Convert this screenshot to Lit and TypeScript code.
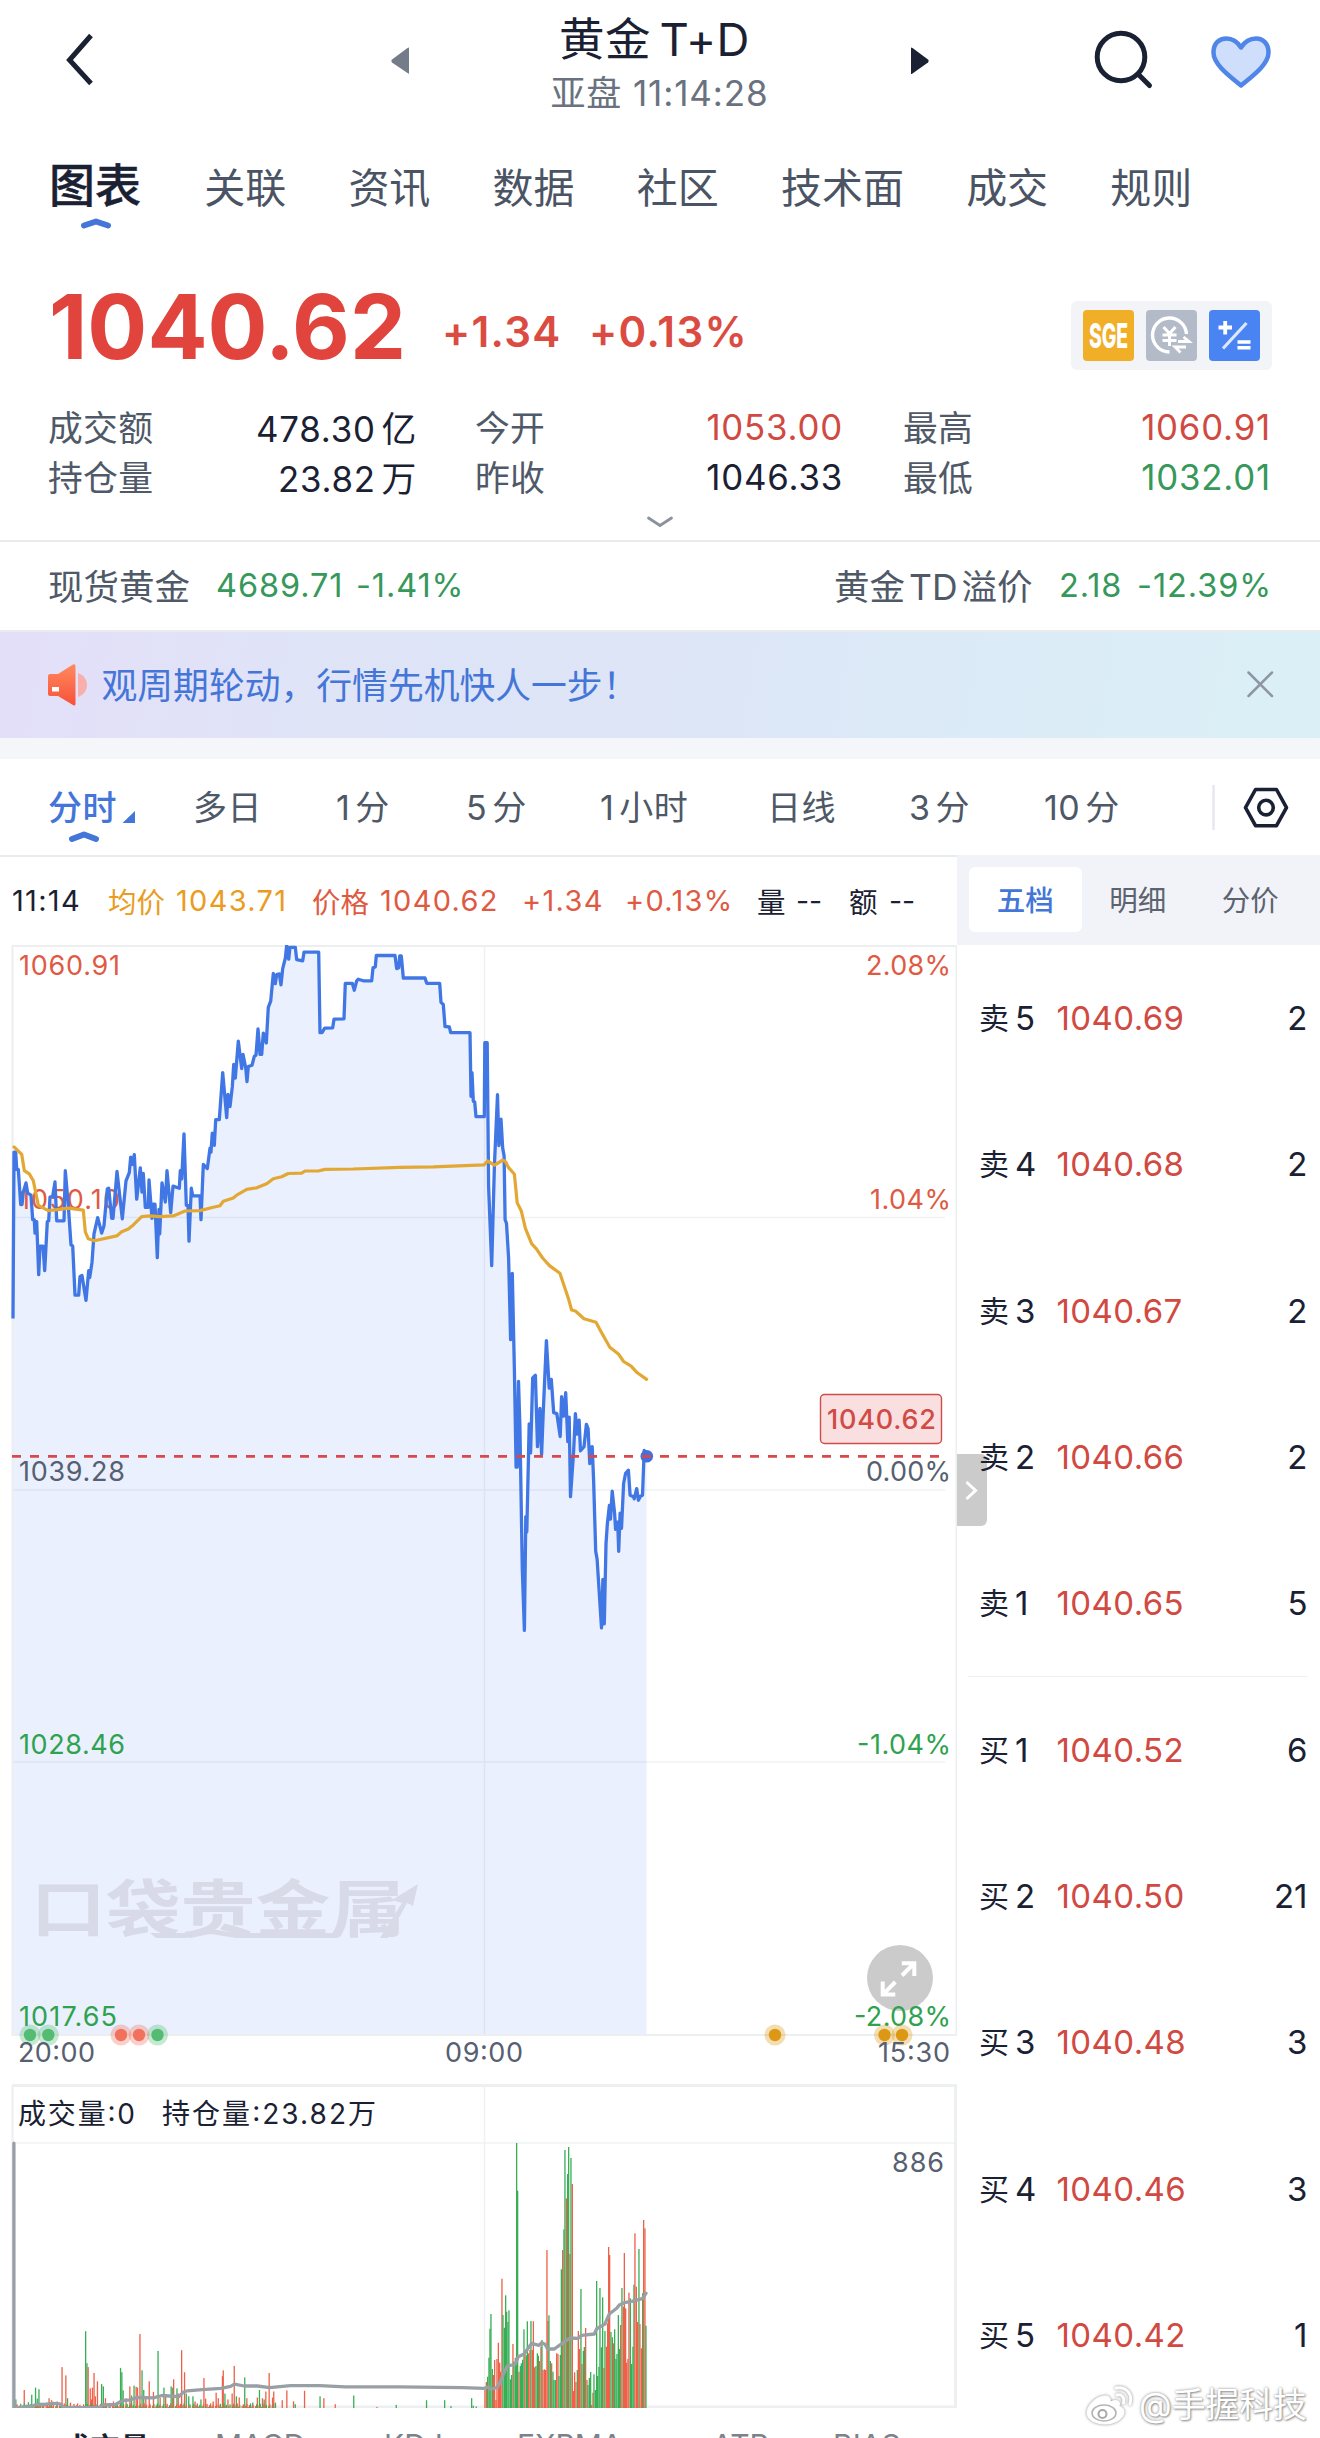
import { LitElement, html, svg, css } from "lit";
import { customElement } from "lit/decorators.js";

type Pt = [number, number];

/** Turns "x,y x,y" source samples into plot coordinates. */
const map = (src: string, sx: number, ox: number, sy: number, oy: number): Pt[] =>
  src.trim().split(/\s+/).map((p) => {
    const [x, y] = p.split(",").map(Number);
    return [ox + x / sx, oy + y / sy] as Pt;
  });
const str = (pts: Pt[]) => pts.map(([x, y]) => `${x.toFixed(1)},${y.toFixed(1)}`).join(" ");

const PRICE: Pt[] = [
  ...map(
    `39,1417 42,1010 47,1010 50,1052 55,1052 62,1138 66,1138 70,1108 78,1085 83,1110 93,1115 98,1175 103,1175 105,1208 110,1180 116,1310 120,1240 129,1240 134,1300 142,1180 146,1178 150,1120 158,1118 165,1083 170,1178 192,1178 196,1055 205,1140 213,1237 218,1240 225,1360 236,1360 240,1315 246,1312 258,1373 266,1300 269,1317 276,1280 282,1210 293,1170 305,1208 312,1190 322,1100 326,1098 335,1172 339,1172 351,1057 367,1173 378,1080 388,1060 392,1022 397,1040 403,1016 410,1125 421,1048 426,1108 430,1062 436,1145 445,1145 447,1078 456,1172 459,1137 465,1137 472,1268 477,1150 479,1210 486,1085 496,1132 501,1055 512,1158 519,1093 538,1098 541,1055 545,1075 552,965 559,1140 564,1140 567,1228 574,1098 578,1117 600,1117 603,1175 610,1040 622,1050 630,1000 633,1010 637,963 643,993 647,930 658,930 668,815 680,925 684,868 690,898 697,850 701,795 706,828 715,738 725,805 729,770 737,803 741,837 745,800 756,797 763,775 768,772 774,708 780,770 785,770 790,718 799,742 805,655 812,640 820,572 826,597 830,575 838,573 843,600 848,560 856,535 860,503 866,537 870,508 886,508 890,538 908,541 912,520 956,520 960,717 966,717 974,706 998,705 1002,684 1032,683 1036,596 1057,596 1063,613 1070,590 1075,586 1090,590 1115,590 1119,558 1126,556 1129,528 1185,528 1190,560 1196,558 1199,529 1204,529 1210,583 1275,583 1280,596 1319,596 1323,643 1330,648 1335,702 1348,703 1352,717 1410,717 1413,873 1416,815 1420,885 1424,887 1428,923 1453,923`,
    3, 0, 2.45, 740
  ),
  ...map(
    `72,358 79,358 83,640 92,795 100,600 109,460 113,560 119,508 124,565 128,580 131,705 135,712 141,780 147,940 152,810 158,1000 163,1190 166,1190 170,1022 174,1110 181,1390 187,1510 191,1287 194,1317 201,1105 205,1162 211,1015 219,1010 225,1150 232,1075 237,1165 242,1080 251,942 259,1035 265,1018 272,1083 281,1085 291,1130 295,1052 301,1090 307,1044 313,1140 317,1092 321,1248 330,1160 335,1085 340,1125 346,1098 350,1158 360,1150 367,1106 372,1115 377,1183 384,1150 388,1215 394,1355 398,1370 411,1505 415,1410 419,1497 424,1340 428,1300 434,1265 437,1292 442,1237 449,1280 452,1312 458,1298 461,1355 465,1280 469,1310 475,1222 481,1202 489,1196 494,1245 504,1248 506,1252 513,1232 518,1255 524,1247 530,1245 535,1157 542,1168`,
    2.904, 460, 1.96, 860
  ),
];

const AVERAGE: Pt[] = [
  ...map(
    `42,997 65,1015 73,1055 88,1063 100,1080 115,1140 145,1153 180,1150 205,1147 250,1152 256,1205 265,1222 283,1227 350,1215 365,1205 385,1198 400,1188 425,1168 450,1166 480,1168 520,1166 555,1154 600,1153 640,1145 660,1141 670,1130 700,1122 710,1115 740,1101 770,1097 800,1087 820,1075 845,1070 865,1062 905,1061 915,1056 955,1056 975,1052 1060,1051 1200,1047 1300,1046 1452,1041`,
    3, 0, 2.45, 740
  ),
  ...map(
    `80,590 100,598 125,588 133,592 140,602 158,616 166,672 178,688 190,722 208,752 222,762 240,780 260,795 290,810 315,860 324,882 335,884 360,899 395,906 410,925 435,955 460,968 475,983 497,992 515,1005 542,1018`,
    2.904, 460, 1.96, 860
  ),
];

const OPEN_INTEREST: Pt[] = [
  ...map(
    `33,820 33,1490 50,1491 60,1488 75,1488 88,1482 105,1483 125,1480 143,1481 150,1490 235,1491 245,1484 275,1483 290,1473 310,1471 325,1465 365,1466 385,1460 425,1463 435,1452 445,1448 480,1445 525,1442 548,1437 557,1431 580,1436 612,1436 640,1440 690,1435 760,1435 820,1438 950,1438 1100,1440 1150,1442`,
    2.376, 0, 2.537, 1820
  ),
  ...map(
    `85,981 93,988 112,982 120,968 132,938 142,918 165,913 175,890 192,882 215,850 237,856 245,848 255,853 263,867 283,867 297,857 330,834 355,835 365,826 403,822 410,806 435,792 448,762 470,745 478,735 493,728 515,724 547,716 558,700`,
    3, 460, 3, 2060
  ),
];

interface Bar { x: number; y: number; up: boolean }
const bars = (src: string, sx: number, ox: number, sy: number, oy: number): Bar[] =>
  src.trim().split(/\s+/).map((t) => {
    const [x, rest] = t.split(":");
    return { x: ox + +x / sx, y: oy + parseFloat(rest) / sy, up: rest.endsWith("r") };
  });

const NIGHT = bars(
  `36:1470g 56:1446r 66:1477g 74:1458g 83:1440g 87:1468g 91:1444g 95:1486r 115:1467r 121:1472r 134:1475r 146:1388r 155:1409r 159:1467g 166:1478r 202:1297g 205:1378g 208:1388r 213:1442r 216:1470r 218:1440r 222:1403r 225:1462r 230:1424r 240:1431g 244:1437g 249:1467r 268:1475r 273:1481g 285:1390g 288:1401g 291:1447g 298:1467r 307:1437r 311:1460g 317:1435g 322:1438r 325:1440r 331:1304r 336:1396g 340:1446g 345:1465r 353:1424r 363:1451r 374:1347g 379:1466r 388:1440g 392:1462r 405:1437g 409:1440g 411:1419r 419:1442g 422:1455r 430:1345r 437:1401r 441:1455g 447:1462g 457:1462g 462:1475r 476:1470g 483:1416r 487:1468r 505:1475r 512:1453r 517:1467r 527:1411r 529:1396r 533:1455g 540:1470r 550:1455r 555:1385r 560:1462g 567:1465r 580:1414g 585:1467r 599:1478g 610:1465r 615:1446g 622:1467r 626:1470g 630:1450r 638:1403r 646:1465r 649:1450r 653:1478g 669:1472r 680:1447r 696:1475r 700:1482g 722:1448r 759:1462g 768:1467r 795:1482r 839:1460g 894:1489r 940:1484g 1012:1472g 1055:1472g 1070:1487g 1119:1467g 1123:1486g 1130:1488g`,
  2.376, 0, 2.537, 1820
);
for (let i = 0; i < 215; i++) {
  const h = ((i * 37) % 11) * 0.45;
  if (h > 0.8) NIGHT.push({ x: 14 + i * 1.21, y: 2408.5 - h - 0.6, up: (i * 7) % 5 > 1 });
}

const DAY = bars(
  `73:990r 77:966r 81:950g 85:893g 88:806g 91:762g 95:927g 98:945r 102:900r 106:1020r 109:897r 113:848r 117:908r 120:935r 124:656r 127:765g 131:803g 135:706g 138:755g 142:786g 145:751g 149:958g 153:945g 157:852r 160:905g 164:893g 168:249g 171:392g 175:935r 179:918g 182:910g 186:899g 190:808g 193:880r 197:886g 200:784g 204:880r 208:870r 211:783g 215:870r 218:784r 222:922r 226:918g 230:880g 233:887g 237:903r 241:860r 244:840g 247:930r 251:928r 255:930r 259:570r 262:783r 265:766g 269:903g 273:910r 277:935g 280:960g 284:960g 288:880r 292:882r 295:948g 299:885g 302:628g 306:570r 310:508g 313:270g 317:415r 321:342g 324:261g 328:582r 331:294g 335:372r 339:993r 342:937r 346:966r 350:930g 353:813r 357:867r 361:687g 364:912r 368:873g 371:861g 375:804r 379:960r 382:975g 386:954g 390:936g 393:1035r 397:998r 400:943g 404:990g 408:663g 411:948g 415:920g 418:684g 422:862g 426:712g 430:924r 433:813g 437:860r 441:790r 444:561r 447:585r 451:816g 455:832g 458:850r 462:808g 466:897g 469:882g 473:765g 476:867g 480:795r 484:684g 488:740r 491:579r 495:745r 498:908r 502:897r 505:698r 509:715g 513:912g 517:860g 520:674g 523:520r 527:680r 531:786r 535:567g 538:792r 542:865r 546:700g 549:480r 553:505r 556:797g`,
  3, 460, 3, 2060
);

const BASE = 2408.5;

@customElement("price-chart")
class PriceChart extends LitElement {
  static styles = css`
    :host { display: block; height: 1463px; }
    svg { display: block; }
    text { font-family: Inter, "Noto Sans CJK SC", sans-serif; font-size: 27px; }
    .grid { stroke: #24365a; stroke-opacity: 0.07; stroke-width: 1.4; fill: none; }
    .frame { stroke: #eceef0; stroke-width: 2; fill: none; }
    .up { fill: #df5a43; }
    .down { fill: #2fa24f; }
    .flat { fill: #566071; }
    .ink { fill: #1a2133; font-size: 28px; }
    .tag { fill: #d04a46; font-weight: 500; }
    .logo { fill: #d8dbe7; font-size: 62px; font-weight: 700; }
  `;

  private label(x: number, cy: number, w: number, cls: string, t: string, end = false) {
    return svg`<text class=${cls} x=${x} y=${cy + 9.8} text-anchor=${end ? "end" : "start"} textLength=${w}>${t}</text>`;
  }

  private marker(x: number, color: string) {
    return svg`<circle cx=${x} cy="2035" r="10.5" fill=${color} opacity="0.33"></circle><circle cx=${x} cy="2035" r="6.2" fill=${color}></circle>`;
  }

  private column(b: Bar) {
    return svg`<rect x=${b.x.toFixed(1)} y=${b.y.toFixed(1)} width="1.3" height=${Math.max(0.6, BASE - b.y).toFixed(1)} fill=${b.up ? "#ee6048" : "#38ae55"}></rect>`;
  }

  render() {
    const area = `${str(PRICE)} 646.6,2034 13,2034`;
    return html`
      <svg width="957" height="1463" viewBox="0 945 957 1463">
        <polygon points=${area} fill="#eaf0fe"></polygon>
        <path class="grid" d="M13 1217.5H945M13 1490H945M13 1762H945M484.5 946V2034M13 2143H955M484.5 2084V2408"></path>
        <path class="frame" d="M12.5 946H956.5V2035H12.5Z"></path>

        <g fill="#d8dbe7">
          <text class="logo" x="31" y="1932" textLength="374" lengthAdjust="spacingAndGlyphs">口袋贵金属</text>
          <path d="M150 1933H186L211 1929L236 1933H338V1938H236L211 1934L186 1938H156Z"></path>
          <path d="M380 1938l22-35-10-3 26-16-5 22-6-3-19 35z"></path>
        </g>

        ${this.label(19, 965, 101, "up", "1060.91")}
        ${this.label(19, 1199, 101, "up", "1050.10")}
        ${this.label(19, 1471, 106, "flat", "1039.28")}
        ${this.label(19, 1744, 106, "down", "1028.46")}
        ${this.label(19, 2016, 98, "down", "1017.65")}
        ${this.label(951, 965, 85, "up", "2.08%", true)}
        ${this.label(951, 1199, 81, "up", "1.04%", true)}
        ${this.label(951, 1471, 85, "flat", "0.00%", true)}
        ${this.label(951, 1744, 94, "down", "-1.04%", true)}

        <polyline points=${str(PRICE)} fill="none" stroke="#4077e4" stroke-width="3.3" stroke-linejoin="round"></polyline>
        <polyline points=${str(AVERAGE)} fill="none" stroke="#e3a733" stroke-width="3.2" stroke-linejoin="round" stroke-linecap="round"></polyline>
        <circle cx="646.8" cy="1456.3" r="6.3" fill="#4470dc"></circle>
        <path d="M12 1456.3H942" stroke="#d9484a" stroke-width="2.8" stroke-dasharray="9 9"></path>

        <rect x="820.5" y="1394.5" width="121" height="49" rx="4" fill="#f9dfdf" stroke="#cf4d48" stroke-width="1.4"></rect>
        ${this.label(827, 1419, 109, "tag", "1040.62")}

        <circle cx="900" cy="1978" r="33" fill="#cbcbcb"></circle>
        <g fill="none" stroke="#fff" stroke-width="4">
          <path d="M901.8 1963.2H914.3V1976M914 1963.5L902 1975.5"></path>
          <path d="M882.7 1981.5V1994.6H895.3M883 1994.3L895.3 1982"></path>
        </g>
        ${this.label(951, 2016.5, 97, "down", "-2.08%", true)}

        ${[30, 48.3, 157.5].map((x) => this.marker(x, "#54bb72"))}
        ${[121, 139].map((x) => this.marker(x, "#f2715c"))}
        ${[775, 884.5, 902].map((x) => this.marker(x, "#dc9714"))}
        ${this.label(18, 2052, 77, "flat", "20:00")}
        ${this.label(445, 2052, 78, "flat", "09:00")}
        ${this.label(950, 2052, 72, "flat", "15:30", true)}

        <path d="M12.5 2408V2085.5" class="frame"></path>
        <path d="M12 2085.5H955.5V2407H12" fill="none" stroke="#edeff0" stroke-width="3"></path>
        ${this.label(18, 2114, 117, "ink", "成交量:0")}
        ${this.label(162, 2114, 214, "ink", "持仓量:23.82万")}
        ${this.label(944, 2162.5, 52, "flat", "886", true)}
        ${NIGHT.map((b) => this.column(b))}
        ${DAY.map((b) => this.column(b))}
        <polyline points=${str(OPEN_INTEREST)} fill="none" stroke="#989fa5" stroke-width="3.3" stroke-linejoin="round" stroke-linecap="round"></polyline>
      </svg>
    `;
  }
}

const BOOK: [string, string, string, string][] = [
  ["卖", "5", "1040.69", "2"],
  ["卖", "4", "1040.68", "2"],
  ["卖", "3", "1040.67", "2"],
  ["卖", "2", "1040.66", "2"],
  ["卖", "1", "1040.65", "5"],
  ["买", "1", "1040.52", "6"],
  ["买", "2", "1040.50", "21"],
  ["买", "3", "1040.48", "3"],
  ["买", "4", "1040.46", "3"],
  ["买", "5", "1040.42", "1"],
];

@customElement("order-book")
class OrderBook extends LitElement {
  static styles = css`
    :host { display: flex; flex-direction: column; width: 363px; position: relative; }
    .tabs { display: flex; height: 90px; padding: 12px 0 0 12px; background: #f2f3f8; box-sizing: border-box; }
    .tab { width: 112.5px; height: 65px; line-height: 67px; text-align: center; font-size: 28.5px; color: #5c6370; border-radius: 6px; }
    .on { background: #fff; color: #4475d8; font-weight: 500; }
    .rows { position: relative; z-index: 1; padding: 0 12.5px 0 22px; }
    .row { display: grid; grid-template-columns: 36px 41.5px 1fr auto; align-items: center; height: 146.3px; font-size: 33px; color: #1a2133; }
    .row span { line-height: 40px; }
    .side { font-size: 30px; }
    .price { color: #d04a42; letter-spacing: 0.4px; }
    .split { position: absolute; left: 11px; right: 12px; top: 731px; height: 1px; background: #eff0f2; }
    .toggle { position: absolute; left: 0; top: 599px; width: 30px; height: 72px; background: #cbcbcb; border-radius: 0 6px 6px 0; display: grid; place-items: center; }
  `;
  render() {
    return html`
      <div class="tabs"><div class="tab on">五档</div><div class="tab">明细</div><div class="tab">分价</div></div>
      <div class="toggle">
        <svg width="30" height="72" viewBox="0 0 30 72"><path d="M9.500 28L18.500 36.500L9.500 45" fill="none" stroke="#fff" stroke-width="3"></path></svg>
      </div>
      <div class="rows">
        ${BOOK.map(([s, n, p, q]) => html`<div class="row"><span class="side">${s}</span><span>${n}</span><span class="price">${p}</span><span>${q}</span></div>`)}
        <div class="split"></div>
      </div>
    `;
  }
}

@customElement("app-root")
class AppRoot extends LitElement {
  static styles = css`
    :host { display: block; width: 1320px; height: 2438px; overflow: hidden; position: relative; background: #fff; color: #1a2133; font-family: Inter, "Noto Sans CJK SC", sans-serif; white-space: nowrap; }
    svg { display: block; flex: none; }
    .head { display: grid; grid-template-columns: 60px 320px 550px 160px 1fr; height: 130px; }
    .head svg { height: 130px; }
    .titles { display: flex; flex-direction: column; align-items: center; padding-top: 12px; padding-right: 1px; }
    .title { font-size: 45.500px; line-height: 56px; letter-spacing: 0.5px; word-spacing: -5px; }
    .sub { font-size: 35px; line-height: 50px; color: #69727e; letter-spacing: 0.9px; padding-left: 10px; }
    .tabs { display: flex; align-items: center; height: 116px; padding: 0 48px 6px; box-sizing: border-box; color: #4a5464; font-size: 41px; gap: 62.200px; }
    .tabs .on { color: #1a2133; font-size: 46px; font-weight: 500; -webkit-text-stroke: 0.4px #1a2133; width: 93px; padding-bottom: 7px; padding-left: 1px; }
    .tick { padding-left: 80px; height: 12px; margin-top: -29px; }
    .quote { display: flex; align-items: center; height: 136px; padding: 0 48px 0 48px; margin-top: 29px; }
    .last { font-size: 89px; font-weight: 700; color: #e1433d; width: 394px; padding-left: 1px; margin-right: -1px; }
    .chg { font-size: 42px; font-weight: 600; color: #db4b42; width: 147px; padding-top: 11px; letter-spacing: 1.300px; }
    .badges { display: flex; gap: 12px; margin-left: auto; padding: 9px 12px; background: #f3f4f8; border-radius: 6px; margin-top: 18px; }
    .stats { display: grid; grid-template-columns: 140px 229px 58px 120px 248px 60px 120px 1fr; grid-template-rows: 50.500px 50.500px; align-items: center; font-size: 34.800px; height: 146px; box-sizing: border-box; padding: 7.500px 49px 0 48px; }
    .stats b { font-weight: 400; text-align: right; letter-spacing: 0.8px; word-spacing: -5px; }
    .stats i { font-style: normal; color: #4f5968; letter-spacing: 0.3px; padding-bottom: 2px; }
    .stats .u { color: #d04a42; }
    .stats .d { color: #36985a; }
    .more { height: 0; padding-left: 645px; display: flex; align-items: flex-end; }
    .more svg { margin-bottom: 11px; }
    .spot { display: flex; align-items: center; height: 84px; border-top: 2px solid #e8ecec; border-bottom: 2px solid #e8ecec; padding: 0 48px 4px 48px; font-size: 35.500px; color: #4f5968; word-spacing: -6px; }
    .spot .g { color: #36985a; font-size: 32.500px; letter-spacing: 0.9px; padding-top: 2px; }
    .banner { display: flex; align-items: center; height: 106px; padding: 0 45px 0 47px; background: linear-gradient(100deg, #e4dff9 0%, #dfe4f7 25%, #dde5f7 50%, #dbecf7 80%, #dbf0f6 100%); color: #4475d8; font-size: 35.800px; }
    .banner span { margin-left: 12.500px; flex: 1; padding-bottom: 4px; }
    .gap { height: 21px; background: #f5f6f9; }
    .periods { display: flex; align-items: center; height: 96px; border-bottom: 2px solid #e8ecec; font-size: 34px; color: #4e5866; padding-left: 48px; }
    .periods .p { flex: none; letter-spacing: 0.5px; padding-bottom: 3px; }
    .periods .n { margin-right: 5px; }
    .periods .on { color: #4475d8; font-weight: 500; width: 69px; }
    .main { display: flex; height: 1583px; margin-top: -2px; }
    .left { width: 957px; }
    .info { display: flex; align-items: center; height: 90px; font-size: 28.500px; padding-left: 12px; }
    .info span { flex: none; }
    .info .w { letter-spacing: 1.300px; font-size: 29px; }
    .am { color: #ea9c22; }
    .rd { color: #df5a43; }
    .inds { display: flex; padding-top: 20px; line-height: 40px; font-size: 30px; color: #7b828c; }
    .inds span { margin-top: -3px; }
    .vol { width: 155px; color: #1a2133; margin-left: 60px; }
    .weibo { position: absolute; z-index: 3; left: 1085px; top: 2381px; display: flex; align-items: center; gap: 5px; font-size: 33.800px; line-height: 48px; color: #fff; text-shadow: 0 0 3px #8d8d8d, 1px 1px 2px #9a9a9a; }
    .weibo svg { filter: drop-shadow(0 0 1.5px #888); }
    .spacer { flex: 1; }
  `;

  private cell(width: number, text: string, cls = "") {
    return html`<span class="p ${cls}" style="width:${width}px">${text}</span>`;
  }

  private period(width: number, count: string, unit: string) {
    return html`<span class="p" style="width:${width}px"><span class="n">${count}</span>${unit}</span>`;
  }

  render() {
    return html`
      <div class="head">
        <svg width="60" viewBox="0 0 60 130"></svg>
        <svg width="380" viewBox="60 0 380 130">
          <path d="M91 35.500L69.500 60L91 83.500" fill="none" stroke="#1a2133" stroke-width="5"></path>
          <path d="M409 48V73.500Q409 74 407.500 73L392 62.500Q390.500 61 392 59.500L407.500 48Q409 47 409 48Z" fill="#757c89"></path>
        </svg>
        <div class="titles"><div class="title">黄金 T+D</div><div class="sub">亚盘 11:14:28</div></div>
        <svg width="160" viewBox="930 0 160 130" overflow="visible">
          <path d="M911 48V73.500Q911 74.500 912.500 73.500L928 62.500Q929.500 61 928 59.500L912.500 48Q911 47 911 48Z" fill="#1a2133"></path>
        </svg>
        <svg width="230" viewBox="1090 0 230 130">
          <g fill="none" stroke="#1a2133" stroke-width="5" stroke-linecap="round">
            <circle cx="1121" cy="57" r="23.800"></circle>
            <path d="M1138.500 74.500L1149.500 85.500"></path>
          </g>
          <path d="M1241 85.500C1231 77 1213.500 65 1213.500 52.500C1213.500 43 1219.500 38.500 1226.500 38.500C1233 38.500 1237.500 42 1241 47.500C1244.500 42 1249.500 38.500 1256 38.500C1263 38.500 1268.500 43.500 1268.500 52.500C1268.500 65 1251 77 1241 85.500Z" fill="#cfdffb" stroke="#4f86e8" stroke-width="4.500" stroke-linejoin="round"></path>
        </svg>
      </div>

      <div class="tabs">
        <span class="on">图表</span><span>关联</span><span>资讯</span><span>数据</span><span>社区</span><span>技术面</span><span>成交</span><span>规则</span>
      </div>
      <div class="tick"><svg width="32" height="12" viewBox="0 0 32 12"><path d="M4 8.500L16 4.500L28 8.500" fill="none" stroke="#4475d8" stroke-width="6" stroke-linecap="round" stroke-linejoin="round"></path></svg></div>

      <div class="quote">
        <span class="last">1040.62</span><span class="chg">+1.34</span><span class="chg">+0.13%</span>
        <div class="badges">
          <svg width="51" height="51" viewBox="0 0 51 51"><rect width="51" height="51" rx="4" fill="#f1ae27"></rect><text transform="translate(25.500 37.500) scale(0.570 1)" text-anchor="middle" font-size="34" font-weight="800" fill="#fff">SGE</text></svg>
          <svg width="51" height="51" viewBox="0 0 51 51"><rect width="51" height="51" rx="4" fill="#b4bbc8"></rect>
            <g fill="none" stroke="#fff" stroke-width="3.400"><path d="M23.500 42A17 17 0 1 1 40.500 24"></path><path d="M17.500 17L23.500 23.500L29.500 17M16.500 25H30.500M16.500 30.500H30.500M23.500 23.500V36" stroke-width="3"></path><path d="M32 31.500H43L37.500 27M40 37H29L34.500 42.500" stroke-width="2.800"></path></g></svg>
          <svg width="51" height="51" viewBox="0 0 51 51"><rect width="51" height="51" rx="4" fill="#4a84f2"></rect>
            <g stroke="#fff" fill="none"><path d="M9.500 17.500H23M16.200 11V24.500" stroke-width="3.800"></path><path d="M14 38.500L37.500 13" stroke-width="3.200" stroke="#dbe8ff"></path><path d="M28.500 32H41.500M28.500 37.800H41.500" stroke-width="3.400"></path></g></svg>
        </div>
      </div>

      <div class="stats">
        <i>成交额</i><b>478.30 亿</b><span></span><i>今开</i><b class="u">1053.00</b><span></span><i>最高</i><b class="u">1060.91</b>
        <i>持仓量</i><b>23.82 万</b><span></span><i>昨收</i><b>1046.33</b><span></span><i>最低</i><b class="d">1032.01</b>
      </div>
      <div class="more"><svg width="30" height="14" viewBox="0 0 30 14"><path d="M3.500 3L15 10.500L26.500 3" fill="none" stroke="#8c929c" stroke-width="2.800" stroke-linecap="round"></path></svg></div>

      <div class="spot">
        ${this.cell(168, "现货黄金")}${this.cell(140, "4689.71", "g")}<span class="g">-1.41%</span>
        <span class="spacer"></span>
        ${this.cell(225, "黄金 TD 溢价")}${this.cell(78, "2.18", "g")}<span class="g">-12.39%</span>
      </div>

      <div class="banner">
        <svg width="42" height="44" viewBox="0 0 42 44">
          <defs><linearGradient id="horn" x1="0" y1="0" x2="0" y2="1"><stop offset="0" stop-color="#ff8a5e"></stop><stop offset="1" stop-color="#f8503a"></stop></linearGradient></defs>
          <path d="M31 10C43 14 43 30 31 34Z" fill="#f9b0ac"></path>
          <path d="M3 11H11L26 1.500Q28.500 0.500 28.500 3.500V40.500Q28.500 43.500 26 42L11 33H3Q1 33 1 31V13Q1 11 3 11Z" fill="url(#horn)"></path>
          <rect x="5" y="24" width="7" height="4.500" fill="#fff"></rect>
        </svg>
        <span>观周期轮动，行情先机快人一步！</span>
        <svg width="30" height="32" viewBox="0 0 30 32"><path d="M3.500 3.500L27 27M27 3.500L3.500 27" stroke="#8f96a3" stroke-width="2.500" stroke-linecap="round"></path></svg>
      </div>
      <div class="gap"></div>

      <div class="periods">
        <span class="p on">分时</span>
        <svg width="76" height="96" viewBox="117 759 76 96" overflow="visible">
          <path d="M135 811V823H122.500Z" fill="#4475d8"></path>
          <path d="M72 839L84 834.500L96 839" fill="none" stroke="#4475d8" stroke-width="6" stroke-linecap="round" stroke-linejoin="round"></path>
        </svg>
        ${this.cell(143, "多日")}${this.period(130, "1", "分")}${this.period(134, "5", "分")}${this.period(167, "1", "小时")}${this.cell(142, "日线")}${this.period(135, "3", "分")}${this.period(168, "10", "分")}
        <svg width="100" height="96" viewBox="1212 759 100 96">
          <path d="M1213.500 785V830" stroke="#e6e9ec" stroke-width="2.500"></path>
          <path d="M1255.500 789.500H1276.500L1286.500 807.600L1276.500 825.700H1255.500L1245.500 807.600Z" fill="none" stroke="#1a2133" stroke-width="3.600" stroke-linejoin="round"></path>
          <circle cx="1266" cy="807.600" r="7.300" fill="none" stroke="#1a2133" stroke-width="3.600"></circle>
        </svg>
      </div>

      <div class="main">
        <div class="left">
          <div class="info">
            ${this.cell(96, "11:14", "w")}${this.cell(68, "均价", "am")}${this.cell(136, "1043.71", "am w")}${this.cell(68, "价格", "rd")}${this.cell(142, "1040.62", "rd w")}${this.cell(103, "+1.34", "rd w")}${this.cell(132, "+0.13%", "rd w")}${this.cell(39, "量")}${this.cell(53, "--")}${this.cell(40, "额")}${this.cell(40, "--")}
          </div>
          <price-chart></price-chart>
          <div class="inds">
            <b class="vol">成交量</b>${this.cell(169, "MACD")}${this.cell(133, "KDJ")}${this.cell(195, "EXPMA")}${this.cell(121, "ATR")}${this.cell(90, "BIAS")}
          </div>
        </div>
        <order-book></order-book>
      </div>

      <div class="weibo">
        <svg width="49" height="42" viewBox="0 0 49 42" fill="none" stroke="#fff">
          <path d="M19 12C10 13 2 22 2 29C2 36 11 40 20 40C31 40 39 34 39 28C39 24 36 23 34 22C36 17 32 15 25 18C26 13 23 11.500 19 12Z" fill="#fff" stroke-width="1"></path>
          <ellipse cx="19" cy="29" rx="12" ry="8" stroke="#b5b5b5" stroke-width="1.600"></ellipse>
          <circle cx="17.500" cy="30" r="4" stroke="#a8a8a8" stroke-width="2"></circle>
          <path d="M32 11C37 10 40 14 38.500 19M31 4C41 2 48 10 45 20" stroke-width="3" stroke-linecap="round"></path>
        </svg>
        <span>@手握科技</span>
      </div>
    `;
  }
}
